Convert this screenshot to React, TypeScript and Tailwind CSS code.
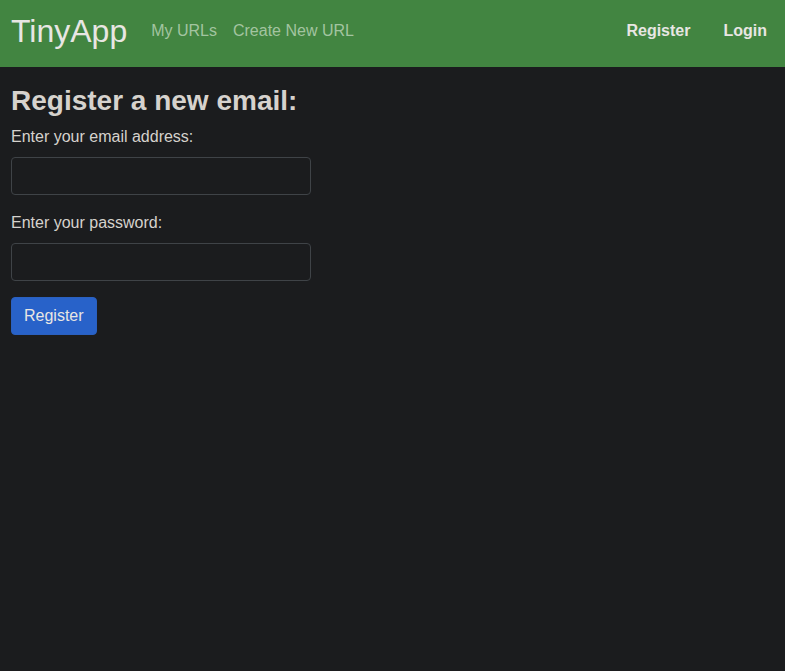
import React from "react";

const App: React.FC = () => {
  return (
    <div
      className="min-h-[671px] bg-[#1b1c1e] text-[#d6d2cd]"
      style={{ fontFamily: '"Liberation Sans", Arial, sans-serif' }}
    >
      <nav className="h-[67px] bg-[#428541] flex items-center pl-[11px] pr-[18px]">
        <a className="text-[32px] leading-none text-[#e8e6e3] mr-6 -mt-[6px]">TinyApp</a>
        <div className="flex gap-4 text-base text-[#a3c4a0] -mt-[6px]">
          <a>My URLs</a>
          <a>Create New URL</a>
        </div>
        <div className="ml-auto flex gap-[33px] text-base font-bold text-[#e8e6e3] -mt-[6px]">
          <a>Register</a>
          <a>Login</a>
        </div>
      </nav>
      <main className="px-[11px] pt-[17px]">
        <h3 className="text-[28px] font-bold leading-[1.2] mb-[7px]">Register a new email:</h3>
        <form className="flex flex-col">
          <label className="text-base leading-6 mb-2">Enter your email address:</label>
          <input
            type="email"
            className="w-[300px] h-[38px] rounded-[4px] border border-[#3f4347] bg-[#1b1c1e] px-3 mb-4"
          />
          <label className="text-base leading-6 mb-2">Enter your password:</label>
          <input
            type="password"
            className="w-[300px] h-[38px] rounded-[4px] border border-[#3f4347] bg-[#1b1c1e] px-3 mb-4"
          />
          <button
            type="button"
            className="self-start h-[38px] px-3 rounded-[4px] bg-[#2862c9] border border-[#2a60c0] text-base text-[#e8e6e3]"
          >
            Register
          </button>
        </form>
      </main>
    </div>
  );
};

export default App;
